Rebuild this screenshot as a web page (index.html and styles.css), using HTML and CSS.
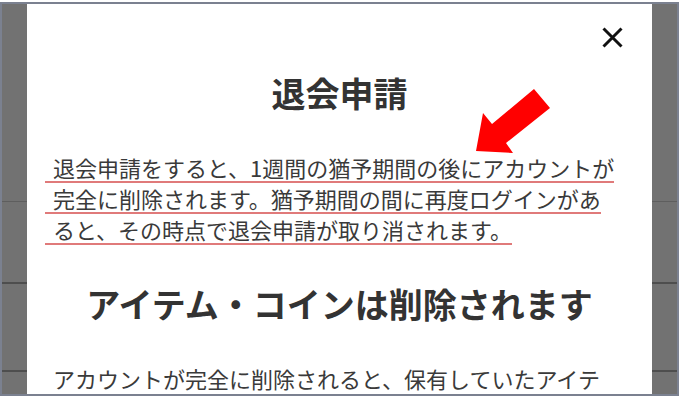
FILE: index.html
```html
<!DOCTYPE html>
<html lang="ja">
<head>
<meta charset="utf-8">
<title>退会申請</title>
<link rel="stylesheet" href="styles.css">
</head>
<body>
<div class="frame">
  <div class="backdrop-col">
    <div class="seg seg-a"></div>
    <div class="seg seg-b"></div>
    <div class="seg seg-c"></div>
    <div class="seg seg-d"></div>
  </div>
  <div class="modal">
    <button class="close" aria-label="閉じる">
      <svg viewBox="0 0 21 21" width="21" height="21"><path d="M1.5 1.5 L19.5 19.5 M19.5 1.5 L1.5 19.5" stroke="#111" stroke-width="3" fill="none"/></svg>
    </button>
    <h1 class="modal-title">退会申請</h1>
    <p class="notice"><span class="marked">退会申請をすると、1週間の猶予期間の後にアカウントが完全に削除されます。猶予期間の間に再度ログインがあると、その時点で退会申請が取り消されます。</span></p>
    <h2 class="section-title">アイテム・コインは削除されます</h2>
    <p class="body-text">アカウントが完全に削除されると、保有していたアイテム・コインはすべて失われます。</p>
  </div>
  <div class="backdrop-col">
    <div class="seg seg-a"></div>
    <div class="seg seg-b"></div>
    <div class="seg seg-c"></div>
    <div class="seg seg-d"></div>
  </div>
</div>
<svg class="annotation-arrow" viewBox="0 0 680 400" width="680" height="400">
  <polygon points="534,89 550,108 506,143 513,153 476,151 483,113 492,124" fill="#ff0000"/>
</svg>
</body>
</html>
```
FILE: styles.css
```css
html, body {
  margin: 0;
  padding: 0;
  background: #fff;
}
body {
  font-family: "Noto Sans CJK JP", "Noto Sans", sans-serif;
  color: #3a3a3a;
  position: relative;
  width: 680px;
  height: 400px;
  overflow: hidden;
}
.frame {
  margin-top: 2px;
  width: 679px;
  height: 394px;
  box-sizing: border-box;
  border: 2px solid #7b8190;
  display: flex;
  overflow: hidden;
}
.backdrop-col {
  width: 25px;
  flex: none;
  background: #727272;
  display: flex;
  flex-direction: column;
}
.seg-a {
  height: 197px;
  border-bottom: 1px solid #5e5e5e;
}
.seg-b {
  height: 80px;
  border-bottom: 2px solid #4e4e4e;
}
.seg-c {
  height: 86px;
  border-bottom: 2px solid #4e4e4e;
}
.seg-d {
  flex: 1;
}
.modal {
  flex: 1;
  position: relative;
  background: #fff;
  padding: 65px 26px 0;
  overflow: hidden;
}
.close {
  position: absolute;
  top: 23px;
  right: 29px;
  width: 21px;
  height: 21px;
  padding: 0;
  border: 0;
  background: none;
  display: block;
}
.close svg {
  display: block;
}
.modal-title {
  margin: 0 0 35px;
  font-size: 34px;
  line-height: 1.4;
  font-weight: 700;
  color: #333;
  text-align: center;
}
.notice {
  margin: 0 8px 35px -8px;
  font-size: 22px;
  line-height: 31px;
}
.marked {
  padding-left: 8px;
  background: linear-gradient(#e07a7a, #e07a7a) left bottom / 100% 2px no-repeat;
  -webkit-box-decoration-break: clone;
  box-decoration-break: clone;
}
.section-title {
  margin: 0 0 36px;
  font-size: 34px;
  line-height: 1.4;
  font-weight: 700;
  color: #333;
  text-align: center;
}
.body-text {
  margin: 0 8px 0 0;
  font-size: 22px;
  line-height: 31px;
}
.annotation-arrow {
  position: absolute;
  left: 0;
  top: 0;
  pointer-events: none;
}
```
